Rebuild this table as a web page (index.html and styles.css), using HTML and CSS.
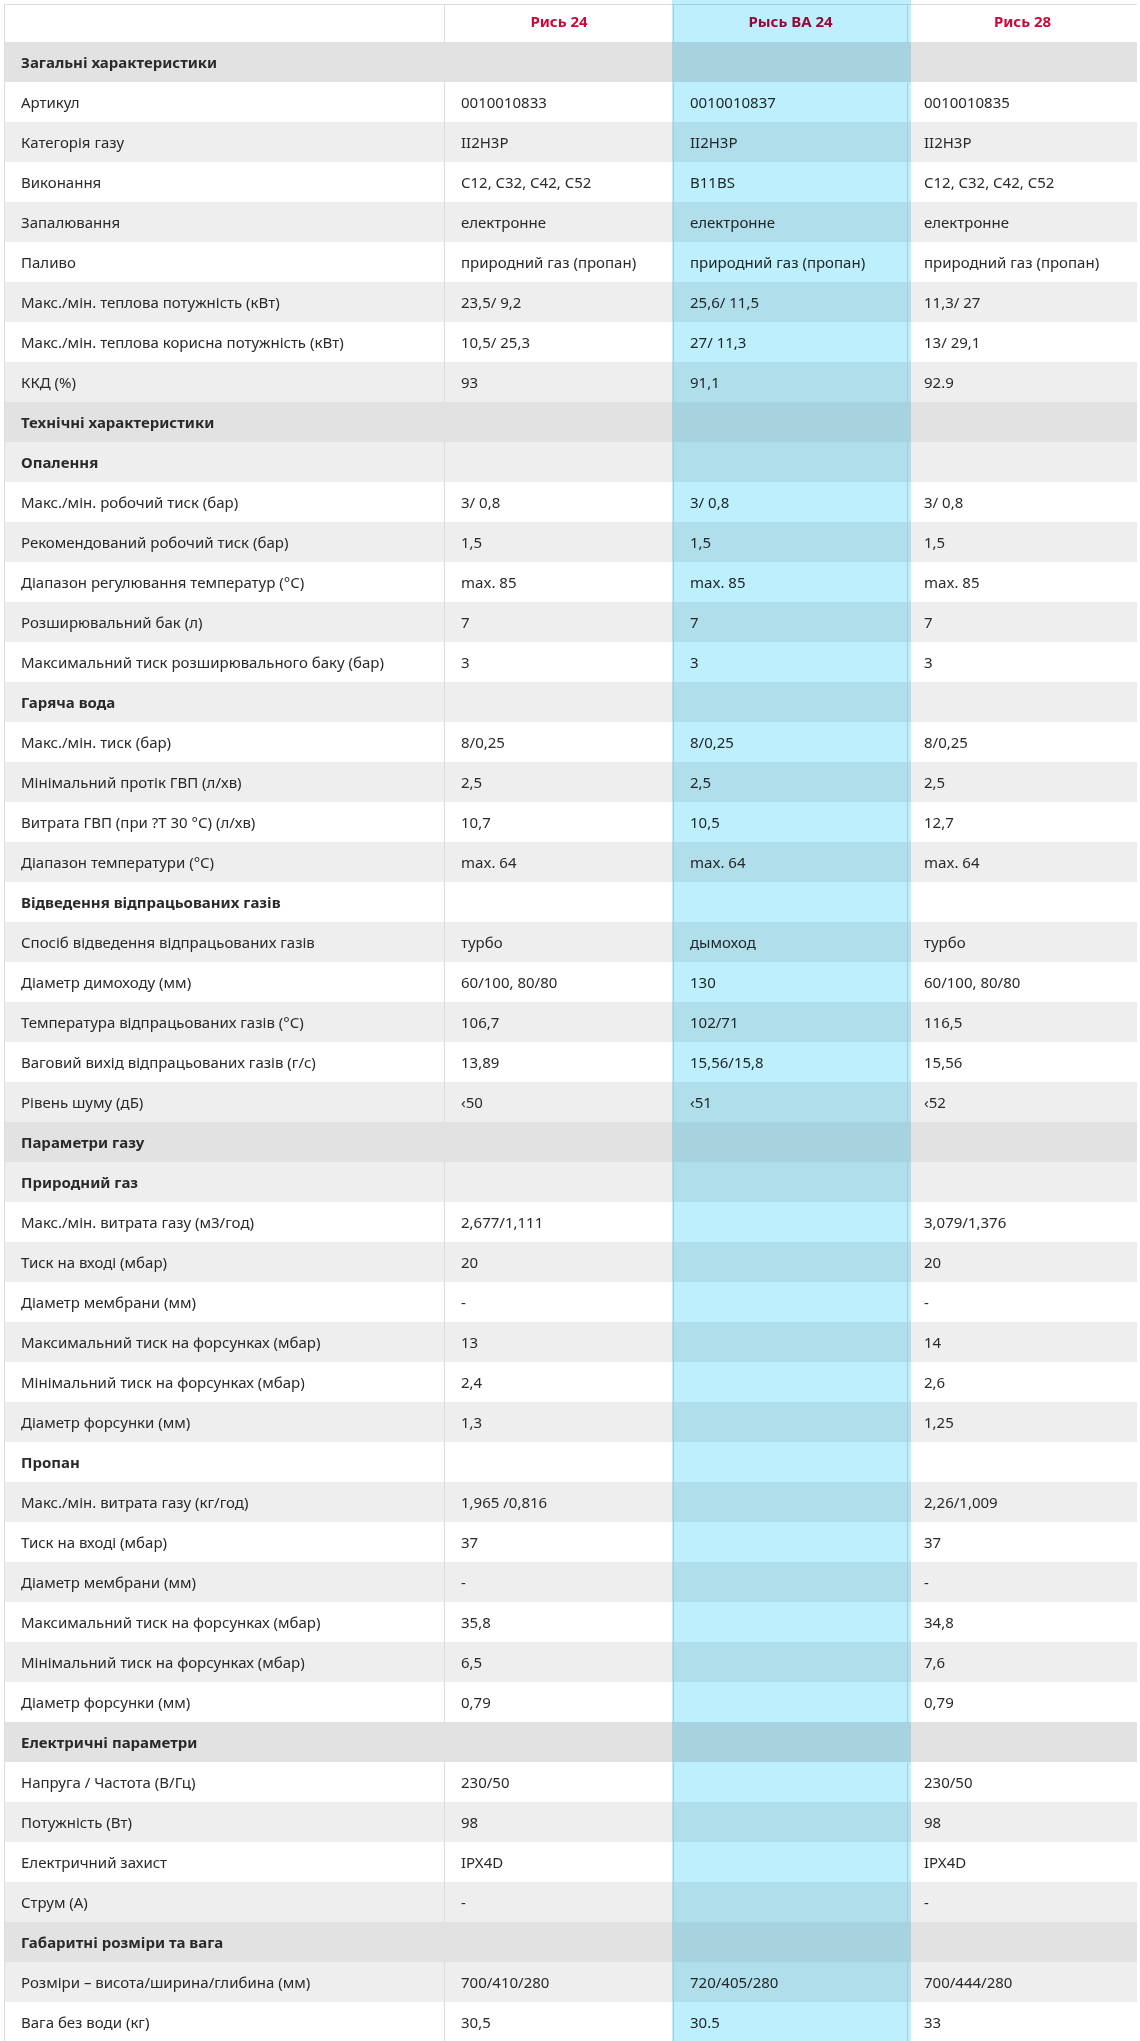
FILE: index.html
```html
<!DOCTYPE html>
<html lang="uk">
<head>
<meta charset="utf-8">
<title>Порівняння характеристик</title>
<link rel="stylesheet" href="styles.css">
</head>
<body>
<div class="wrap">
<table class="spec">
<thead>
<tr><th class="c1"></th><th class="c2">Рись 24</th><th class="c3">Рысь ВА 24</th><th class="c4">Рись 28</th></tr>
</thead>
<tbody>
<tr class="sec"><td colspan="4">Загальні характеристики</td></tr>
<tr><td>Артикул</td><td>0010010833</td><td>0010010837</td><td>0010010835</td></tr>
<tr><td>Категорія газу</td><td>II2H3P</td><td>II2H3P</td><td>II2H3P</td></tr>
<tr><td>Виконання</td><td>C12, C32, C42, C52</td><td>B11BS</td><td>C12, C32, C42, C52</td></tr>
<tr><td>Запалювання</td><td>електронне</td><td>електронне</td><td>електронне</td></tr>
<tr><td>Паливо</td><td>природний газ (пропан)</td><td>природний газ (пропан)</td><td>природний газ (пропан)</td></tr>
<tr><td>Макс./мін. теплова потужність (кВт)</td><td>23,5/ 9,2</td><td>25,6/ 11,5</td><td>11,3/ 27</td></tr>
<tr><td>Макс./мін. теплова корисна потужність (кВт)</td><td>10,5/ 25,3</td><td>27/ 11,3</td><td>13/ 29,1</td></tr>
<tr><td>ККД (%)</td><td>93</td><td>91,1</td><td>92.9</td></tr>
<tr class="sec"><td colspan="4">Технічні характеристики</td></tr>
<tr class="sub"><td>Опалення</td><td></td><td></td><td></td></tr>
<tr><td>Макс./мін. робочий тиск (бар)</td><td>3/ 0,8</td><td>3/ 0,8</td><td>3/ 0,8</td></tr>
<tr><td>Рекомендований робочий тиск (бар)</td><td>1,5</td><td>1,5</td><td>1,5</td></tr>
<tr><td>Діапазон регулювання температур (°C)</td><td>max. 85</td><td>max. 85</td><td>max. 85</td></tr>
<tr><td>Розширювальний бак (л)</td><td>7</td><td>7</td><td>7</td></tr>
<tr><td>Максимальний тиск розширювального баку (бар)</td><td>3</td><td>3</td><td>3</td></tr>
<tr class="sub"><td>Гаряча вода</td><td></td><td></td><td></td></tr>
<tr><td>Макс./мін. тиск (бар)</td><td>8/0,25</td><td>8/0,25</td><td>8/0,25</td></tr>
<tr><td>Мінімальний протік ГВП (л/хв)</td><td>2,5</td><td>2,5</td><td>2,5</td></tr>
<tr><td>Витрата ГВП (при ?T 30 °C) (л/хв)</td><td>10,7</td><td>10,5</td><td>12,7</td></tr>
<tr><td>Діапазон температури (°C)</td><td>max. 64</td><td>max. 64</td><td>max. 64</td></tr>
<tr class="sub"><td>Відведення відпрацьованих газів</td><td></td><td></td><td></td></tr>
<tr><td>Спосіб відведення відпрацьованих газів</td><td>турбо</td><td>дымоход</td><td>турбо</td></tr>
<tr><td>Діаметр димоходу (мм)</td><td>60/100, 80/80</td><td>130</td><td>60/100, 80/80</td></tr>
<tr><td>Температура відпрацьованих газів (°C)</td><td>106,7</td><td>102/71</td><td>116,5</td></tr>
<tr><td>Ваговий вихід відпрацьованих газів (г/с)</td><td>13,89</td><td>15,56/15,8</td><td>15,56</td></tr>
<tr><td>Рівень шуму (дБ)</td><td>‹50</td><td>‹51</td><td>‹52</td></tr>
<tr class="sec"><td colspan="4">Параметри газу</td></tr>
<tr class="sub"><td>Природний газ</td><td></td><td></td><td></td></tr>
<tr><td>Макс./мін. витрата газу (м3/год)</td><td>2,677/1,111</td><td></td><td>3,079/1,376</td></tr>
<tr><td>Тиск на вході (мбар)</td><td>20</td><td></td><td>20</td></tr>
<tr><td>Діаметр мембрани (мм)</td><td>-</td><td></td><td>-</td></tr>
<tr><td>Максимальний тиск на форсунках (мбар)</td><td>13</td><td></td><td>14</td></tr>
<tr><td>Мінімальний тиск на форсунках (мбар)</td><td>2,4</td><td></td><td>2,6</td></tr>
<tr><td>Діаметр форсунки (мм)</td><td>1,3</td><td></td><td>1,25</td></tr>
<tr class="sub"><td>Пропан</td><td></td><td></td><td></td></tr>
<tr><td>Макс./мін. витрата газу (кг/год)</td><td>1,965 /0,816</td><td></td><td>2,26/1,009</td></tr>
<tr><td>Тиск на вході (мбар)</td><td>37</td><td></td><td>37</td></tr>
<tr><td>Діаметр мембрани (мм)</td><td>-</td><td></td><td>-</td></tr>
<tr><td>Максимальний тиск на форсунках (мбар)</td><td>35,8</td><td></td><td>34,8</td></tr>
<tr><td>Мінімальний тиск на форсунках (мбар)</td><td>6,5</td><td></td><td>7,6</td></tr>
<tr><td>Діаметр форсунки (мм)</td><td>0,79</td><td></td><td>0,79</td></tr>
<tr class="sec"><td colspan="4">Електричні параметри</td></tr>
<tr><td>Напруга / Частота (В/Гц)</td><td>230/50</td><td></td><td>230/50</td></tr>
<tr><td>Потужність (Вт)</td><td>98</td><td></td><td>98</td></tr>
<tr><td>Електричний захист</td><td>IPX4D</td><td></td><td>IPX4D</td></tr>
<tr><td>Струм (А)</td><td>-</td><td></td><td>-</td></tr>
<tr class="sec"><td colspan="4">Габаритні розміри та вага</td></tr>
<tr><td>Розміри – висота/ширина/глибина (мм)</td><td>700/410/280</td><td>720/405/280</td><td>700/444/280</td></tr>
<tr><td>Вага без води (кг)</td><td>30,5</td><td>30.5</td><td>33</td></tr>
</tbody>
</table>
<div class="highlight"></div>
</div>
</body>
</html>
```

FILE: styles.css
```css
html, body {
  margin: 0;
  padding: 0;
  background: #ffffff;
}

.wrap {
  position: relative;
  padding: 4px 3px 0 4px;
  font-family: "Noto Sans", "Open Sans", sans-serif;
  color: #2a2a2a;
}

.spec {
  border-collapse: separate;
  border-spacing: 0;
  table-layout: fixed;
  width: 1133px;
  border-top: 1px solid #dddddd;
  border-left: 1px solid #dddddd;
  font-size: 15px;
}

.spec th,
.spec td {
  box-sizing: border-box;
  padding: 0 16px;
  text-align: left;
  vertical-align: middle;
  font-weight: normal;
  white-space: nowrap;
}

.spec thead th {
  height: 37px;
  padding-bottom: 6px;
  text-align: center;
  font-weight: bold;
  font-size: 15px;
  color: #c9093a;
}

.spec .c1 { width: 439px; }
.spec .c2 { width: 229px; }
.spec .c3 { width: 234px; }
.spec .c4 { width: 230px; }

.spec th + th,
.spec td + td {
  border-left: 1px solid #dddddd;
}

.spec tbody td {
  height: 40px;
}

.spec tbody tr:nth-child(odd) {
  background: #eeeeee;
}

.spec tbody tr.sec {
  background: #e2e2e2;
}

.spec tr.sec td,
.spec tr.sub td {
  font-weight: bold;
}

.highlight {
  position: absolute;
  top: 0;
  left: 672px;
  width: 239px;
  height: 100%;
  background: #bdeffc;
  mix-blend-mode: multiply;
  pointer-events: none;
}
```
